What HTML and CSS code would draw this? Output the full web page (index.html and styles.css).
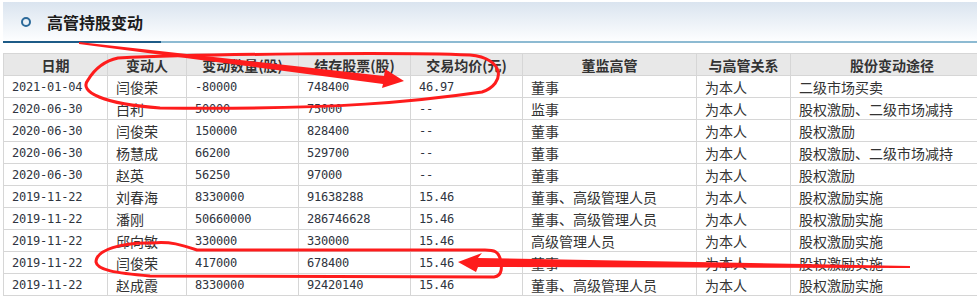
FILE: index.html
```html
<!DOCTYPE html>
<html lang="zh-CN">
<head>
<meta charset="utf-8">
<title>高管持股变动</title>
<link rel="stylesheet" href="styles.css">
</head>
<body>
<div class="page">
  <div class="panel-head">
    <div class="title-row">
      <span class="dot"></span>
      <h2 class="title">高管持股变动</h2>
    </div>
    <div class="rule"><span class="rule-dark"></span><span class="rule-light"></span></div>
  </div>

  <table class="grid">
    <colgroup>
      <col class="c1"><col class="c2"><col class="c3"><col class="c4"><col class="c5"><col class="c6"><col class="c7"><col class="c8">
    </colgroup>
    <thead>
      <tr><th>日期</th><th>变动人</th><th>变动数量(股)</th><th>结存股票(股)</th><th>交易均价(元)</th><th>董监高管</th><th>与高管关系</th><th>股份变动途径</th></tr>
    </thead>
    <tbody>
      <tr><td class="num">2021-01-04</td><td>闫俊荣</td><td class="num">-80000</td><td class="num">748400</td><td class="num">46.97</td><td>董事</td><td>为本人</td><td>二级市场买卖</td></tr>
      <tr><td class="num">2020-06-30</td><td>白利</td><td class="num">50000</td><td class="num">75000</td><td class="num">--</td><td>监事</td><td>为本人</td><td>股权激励、二级市场减持</td></tr>
      <tr><td class="num">2020-06-30</td><td>闫俊荣</td><td class="num">150000</td><td class="num">828400</td><td class="num">--</td><td>董事</td><td>为本人</td><td>股权激励</td></tr>
      <tr><td class="num">2020-06-30</td><td>杨慧成</td><td class="num">66200</td><td class="num">529700</td><td class="num">--</td><td>董事</td><td>为本人</td><td>股权激励、二级市场减持</td></tr>
      <tr><td class="num">2020-06-30</td><td>赵英</td><td class="num">56250</td><td class="num">97000</td><td class="num">--</td><td>董事</td><td>为本人</td><td>股权激励</td></tr>
      <tr><td class="num">2019-11-22</td><td>刘春海</td><td class="num">8330000</td><td class="num">91638288</td><td class="num">15.46</td><td>董事、高级管理人员</td><td>为本人</td><td>股权激励实施</td></tr>
      <tr><td class="num">2019-11-22</td><td>潘刚</td><td class="num">50660000</td><td class="num">286746628</td><td class="num">15.46</td><td>董事、高级管理人员</td><td>为本人</td><td>股权激励实施</td></tr>
      <tr><td class="num">2019-11-22</td><td>邱向敏</td><td class="num">330000</td><td class="num">330000</td><td class="num">15.46</td><td>高级管理人员</td><td>为本人</td><td>股权激励实施</td></tr>
      <tr><td class="num">2019-11-22</td><td>闫俊荣</td><td class="num">417000</td><td class="num">678400</td><td class="num">15.46</td><td>董事</td><td>为本人</td><td>股权激励实施</td></tr>
      <tr><td class="num">2019-11-22</td><td>赵成霞</td><td class="num">8330000</td><td class="num">92420140</td><td class="num">15.46</td><td>董事、高级管理人员</td><td>为本人</td><td>股权激励实施</td></tr>
    </tbody>
  </table>

  <svg class="marks" width="977" height="306" viewBox="0 0 977 306" aria-hidden="true">
    <g fill="none" stroke="#fe1c1c" stroke-width="3" stroke-linecap="round" stroke-linejoin="round">
      <path d="M118 58 C200 54 400 52 470 55 C505 58 506 84 482 92 C420 101 340 110 160 108 C104 104 78 92 88 80 C94 70 104 61 118 58"/>
      <path d="M152 243 C122 242 96 250 96 262 C97 270 115 273 150 276 L494 277 C503 276 502 266 500 258 C498 252 495 250 485 250 L197 250 C182 245 170 241 152 243"/>
    </g>
    <g fill="#fe1c1c">
      <polygon points="79,42 384,76 385,69 404,81 382,88 383,84 79,44"/>
      <polygon points="458,262 482,253 478,258 910,266 910,268 478,267 476,272"/>
    </g>
  </svg>
</div>
</body>
</html>
```

FILE: styles.css
```css
html, body {
  margin: 0;
  padding: 0;
  background: #fff;
  overflow: hidden;
}

.page {
  position: relative;
  width: 977px;
  height: 306px;
  overflow: hidden;
  padding: 2px 0 0 3px;
  box-sizing: border-box;
}

.panel-head {
  display: flex;
  flex-direction: column;
  width: 1000px;
}

.title-row {
  height: 39px;
  display: flex;
  align-items: center;
  background: linear-gradient(#dae4ef, #fdfeff);
}

.dot {
  width: 6px;
  height: 6px;
  border: 2px solid #2c6a9a;
  border-radius: 50%;
  margin-left: 18px;
  margin-right: 16px;
}

.title {
  margin: 0;
  font: bold 16px "Noto Sans CJK SC", sans-serif;
  color: #1c1c1c;
  line-height: 20px;
}

.rule {
  display: flex;
  height: 2px;
}

.rule-dark {
  width: 158px;
  background: #1d5b87;
}

.rule-light {
  flex: 1;
  background: #8dbad2;
}

.grid {
  margin-top: 10px;
  border-collapse: collapse;
  table-layout: fixed;
  width: 990px;
  font: 14px "Noto Sans CJK SC", sans-serif;
  color: #333;
}

.c1 { width: 104px; }
.c2 { width: 79px; }
.c3 { width: 112px; }
.c4 { width: 112px; }
.c5 { width: 112px; }
.c6 { width: 174px; }
.c7 { width: 94px; }
.c8 { width: 203px; }

.grid th,
.grid td {
  border: 1px solid #d6d6d6;
  height: 21px;
  padding: 0 0 0 8px;
  line-height: 20px;
  white-space: nowrap;
  overflow: hidden;
  text-align: left;
  font-weight: normal;
}

.grid th {
  background: #e8e8e8;
  text-align: center;
  font-weight: bold;
  padding: 0;
  color: #333;
}

.grid td.num {
  font: 12px "DejaVu Sans Mono", monospace;
  letter-spacing: -0.2px;
  color: #2e3440;
}

.marks {
  position: absolute;
  top: 0;
  left: 0;
  pointer-events: none;
}
```
